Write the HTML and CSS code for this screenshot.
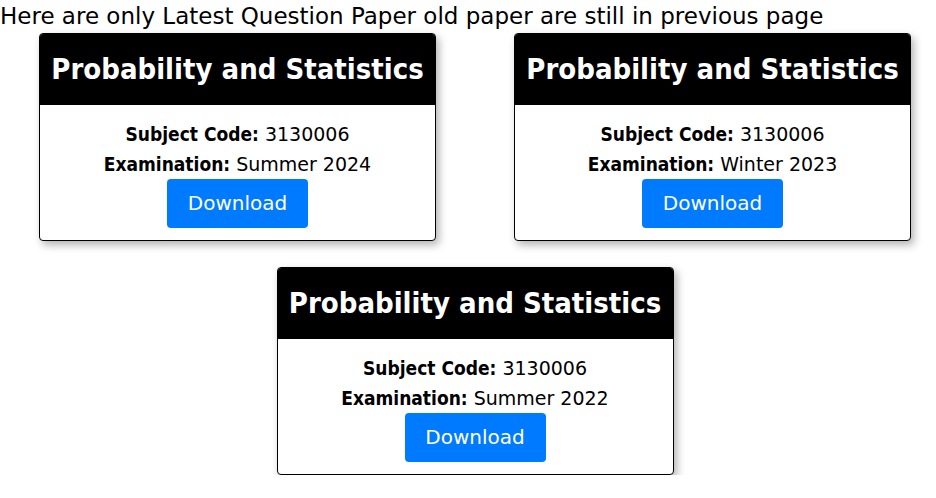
FILE: index.html
```html
<!DOCTYPE html>
<html>
<head>
<meta charset="utf-8">
<link rel="stylesheet" href="styles.css">
</head>
<body>
<p class="intro">Here are only Latest Question Paper old paper are still in previous page</p>
<div class="cards">
  <div class="card">
    <div class="card-head">Probability and Statistics</div>
    <div class="card-body">
      <div class="line"><b>Subject Code:</b> 3130006</div>
      <div class="line"><b>Examination:</b> Summer 2024</div>
      <a class="btn" href="#">Download</a>
    </div>
  </div>
  <div class="card">
    <div class="card-head">Probability and Statistics</div>
    <div class="card-body">
      <div class="line"><b>Subject Code:</b> 3130006</div>
      <div class="line"><b>Examination:</b> Winter 2023</div>
      <a class="btn" href="#">Download</a>
    </div>
  </div>
  <div class="card">
    <div class="card-head">Probability and Statistics</div>
    <div class="card-body">
      <div class="line"><b>Subject Code:</b> 3130006</div>
      <div class="line"><b>Examination:</b> Summer 2022</div>
      <a class="btn" href="#">Download</a>
    </div>
  </div>
</div>
</body>
</html>
```
FILE: styles.css
```css
* { box-sizing: border-box; }
body {
  margin: 0;
  font-family: "DejaVu Sans", sans-serif;
  color: #000;
  background: #fff;
}
.intro {
  margin: 0;
  font-size: 23px;
  line-height: 33px;
}
.cards {
  width: 872px;
  margin-left: 39px;
  display: flex;
  flex-wrap: wrap;
  justify-content: center;
  column-gap: 78px;
  row-gap: 26px;
}
.card {
  width: 397px;
  border: 1px solid #000;
  border-radius: 4px;
  overflow: hidden;
  box-shadow: 3px 4px 8px rgba(0,0,0,0.3);
  background: #fff;
}
.card-head {
  background: #000;
  color: #fff;
  text-align: center;
  font-family: "DejaVu Sans Condensed", "DejaVu Sans", sans-serif;
  font-size: 29px;
  font-weight: bold;
  line-height: 45px;
  padding: 13px 0;
}
.card-body {
  text-align: center;
  padding: 14px 0 12px;
  font-size: 19px;
}
.line {
  line-height: 30px;
}
.line b {
  font-family: "DejaVu Sans Condensed", "DejaVu Sans", sans-serif;
  font-weight: bold;
}
.btn {
  display: inline-block;
  width: 141px;
  height: 49px;
  line-height: 49px;
  background: #007bff;
  color: #fff;
  border-radius: 4px;
  text-decoration: none;
  font-size: 20px;
}
```
